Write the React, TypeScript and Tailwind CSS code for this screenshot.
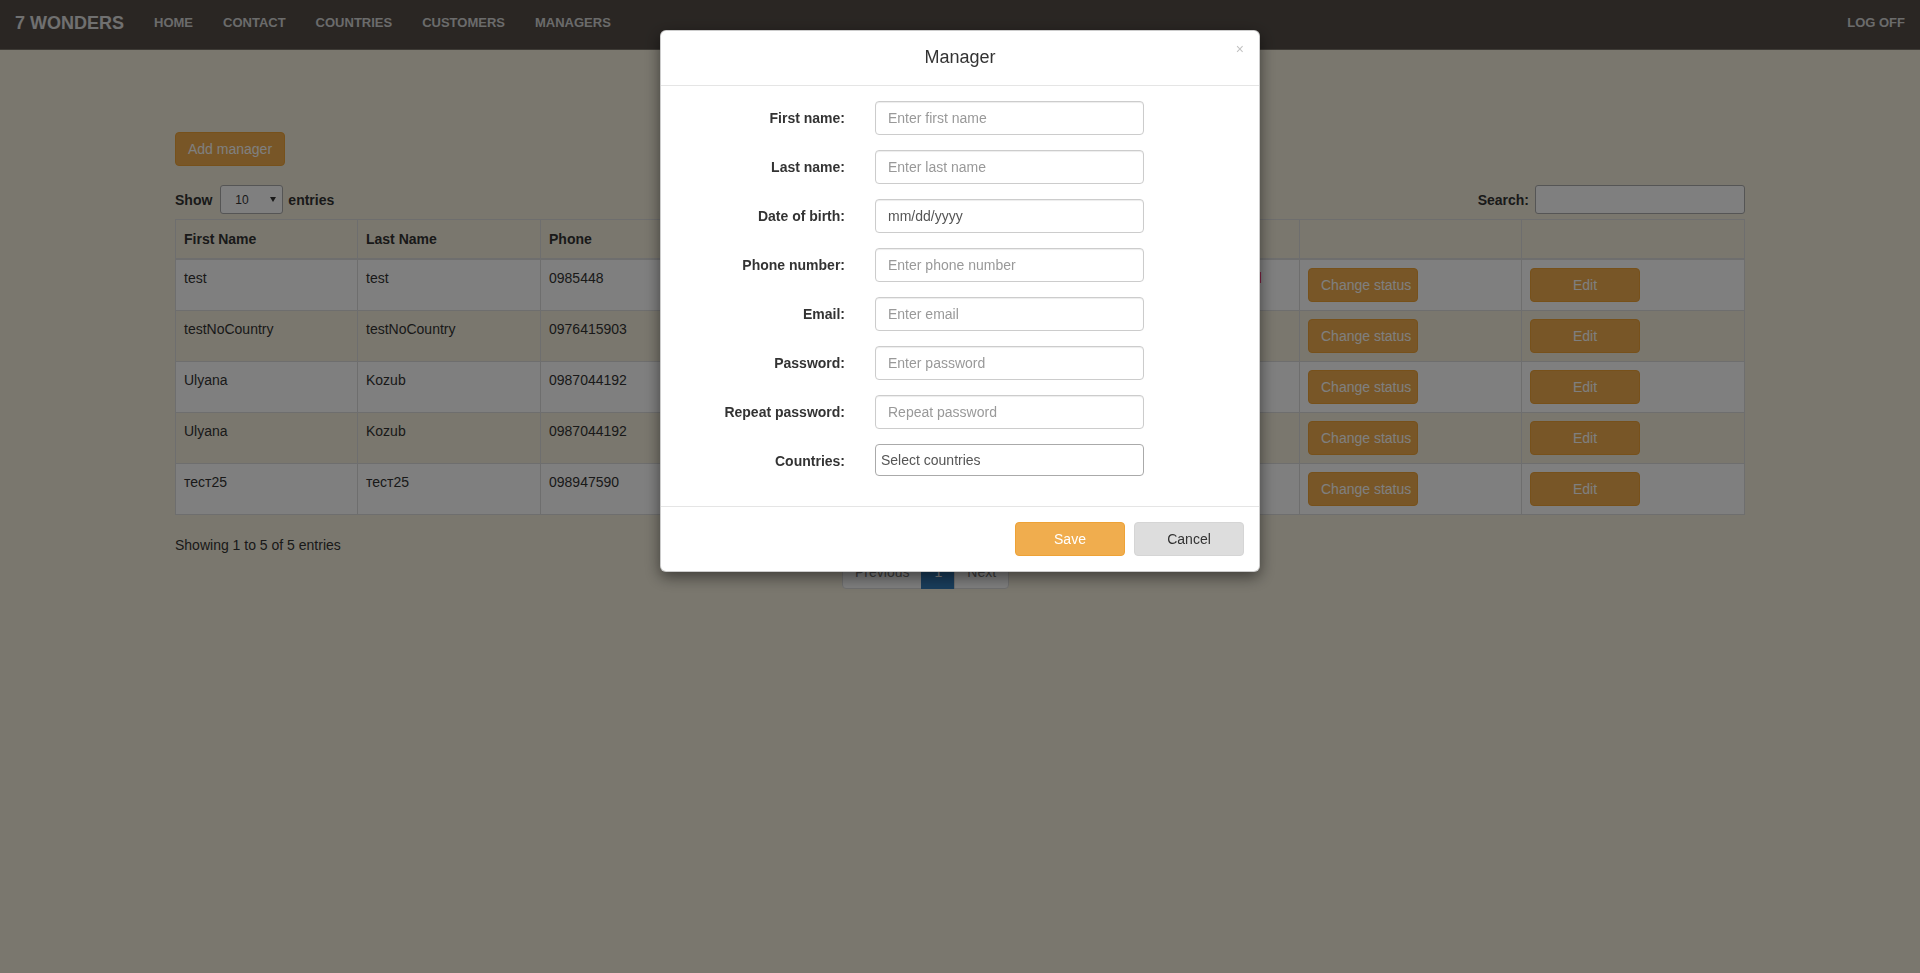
import { useState } from "react";

type Manager = {
  firstName: string;
  lastName: string;
  phone: string;
  email: string;
  birth: string;
  status: string;
};

const managers: Manager[] = [
  { firstName: "test", lastName: "test", phone: "0985448", email: "test@gmail.com", birth: "1995-03-12", status: "Blocked" },
  { firstName: "testNoCountry", lastName: "testNoCountry", phone: "0976415903", email: "nocountry@gmail.com", birth: "1993-07-21", status: "" },
  { firstName: "Ulyana", lastName: "Kozub", phone: "0987044192", email: "ulyana@gmail.com", birth: "1996-10-02", status: "" },
  { firstName: "Ulyana", lastName: "Kozub", phone: "0987044192", email: "ulyana.k@gmail.com", birth: "1996-10-02", status: "" },
  { firstName: "тест25", lastName: "тест25", phone: "098947590", email: "test25@gmail.com", birth: "1990-01-25", status: "" },
];

const navLinks = ["HOME", "CONTACT", "COUNTRIES", "CUSTOMERS", "MANAGERS"];

const fields = [
  { label: "First name:", placeholder: "Enter first name" },
  { label: "Last name:", placeholder: "Enter last name" },
  { label: "Date of birth:", value: "mm/dd/yyyy" },
  { label: "Phone number:", placeholder: "Enter phone number" },
  { label: "Email:", placeholder: "Enter email" },
  { label: "Password:", placeholder: "Enter password" },
  { label: "Repeat password:", placeholder: "Repeat password" },
];

function Navbar() {
  return (
    <nav className="h-[50px] bg-[#544d47] border-b border-[#7a746b] flex items-center justify-between px-[15px] pb-[4px]">
      <div className="flex items-center">
        <span className="text-[18px] font-bold text-[#e0e0e0] pr-[15px]">7 WONDERS</span>
        {navLinks.map((l) => (
          <a key={l} className="px-[15px] text-[13px] font-bold text-[#d6d6d6]">
            {l}
          </a>
        ))}
      </div>
      <a className="text-[13px] font-bold text-[#d6d6d6]">LOG OFF</a>
    </nav>
  );
}

function WarnButton({ children }: { children: string }) {
  return (
    <button className="w-[110px] h-[34px] rounded-[4px] bg-[#f0ad4e] border border-[#eea236] text-white text-[14px] px-[12px] whitespace-nowrap">
      {children}
    </button>
  );
}

function ManagersTable() {
  return (
    <table className="w-full table-fixed border-collapse border border-[#ddd] mt-[5px]">
      <colgroup>
        <col className="w-[182px]" />
        <col className="w-[183px]" />
        <col className="w-[182px]" />
        <col className="w-[240px]" />
        <col className="w-[241px]" />
        <col className="w-[96px]" />
        <col className="w-[222px]" />
        <col />
      </colgroup>
      <thead>
        <tr>
          {["First Name", "Last Name", "Phone", "Email", "Date of birth", "Status", "", ""].map((h, i) => (
            <th key={i} className="border border-[#ddd] border-b-2 p-[8px] text-left font-bold h-[39px]">
              {h}
            </th>
          ))}
        </tr>
      </thead>
      <tbody>
        {managers.map((m, i) => (
          <tr key={i} className={i % 2 === 0 ? "bg-white" : ""}>
            <td className="border border-[#ddd] p-[8px] align-top">{m.firstName}</td>
            <td className="border border-[#ddd] p-[8px] align-top">{m.lastName}</td>
            <td className="border border-[#ddd] p-[8px] align-top">{m.phone}</td>
            <td className="border border-[#ddd] p-[8px] align-top">{m.email}</td>
            <td className="border border-[#ddd] p-[8px] align-top">{m.birth}</td>
            <td className="border border-[#ddd] p-[8px] align-top text-[#ff2020]">{m.status}</td>
            <td className="border border-[#ddd] p-[8px] align-top">
              <WarnButton>Change status</WarnButton>
            </td>
            <td className="border border-[#ddd] p-[8px] align-top">
              <WarnButton>Edit</WarnButton>
            </td>
          </tr>
        ))}
      </tbody>
    </table>
  );
}

function ManagerModal() {
  const [values, setValues] = useState<Record<string, string>>({});
  return (
    <div className="fixed inset-0 bg-black/50 flex justify-center items-start pt-[30px]">
      <div className="relative w-[600px] bg-white rounded-[6px] border border-black/20 shadow-[0_5px_15px_rgba(0,0,0,0.5)]">
        {/* header */}
        <div className="border-b border-[#e5e5e5] px-[15px] pt-[14px] pb-[16px]">
          <h4 className="text-[18px] leading-[24px] text-center text-[#333]">Manager</h4>
        </div>
        <button className="absolute top-[11px] right-[15px] text-[14px] leading-none text-black/25">×</button>

        {/* body */}
        <div className="p-[15px]">
          {fields.map((f) => (
            <div key={f.label} className="flex mx-[-15px] mb-[15px]">
              <label className="w-[199px] px-[15px] pt-[7px] text-right font-bold text-[#333]">{f.label}</label>
              <div className="w-[299px] px-[15px]">
                <input
                  className="w-full h-[34px] border border-[#ccc] rounded-[4px] px-[12px] py-[6px] text-[14px] text-[#555] shadow-[inset_0_1px_1px_rgba(0,0,0,0.075)] placeholder:text-[#999] outline-none"
                  placeholder={f.placeholder}
                  value={f.value ?? values[f.label] ?? ""}
                  onChange={(e) => setValues({ ...values, [f.label]: e.target.value })}
                />
              </div>
            </div>
          ))}
          <div className="flex mx-[-15px] mb-[15px]">
            <label className="w-[199px] px-[15px] pt-[7px] text-right font-bold text-[#333]">Countries:</label>
            <div className="w-[299px] px-[15px]">
              <div className="h-[32px] border border-[#aaa] rounded-[4px] pl-[5px] flex items-center text-[14px] text-[#555]">
                Select countries
              </div>
            </div>
          </div>
        </div>

        {/* footer */}
        <div className="border-t border-[#e5e5e5] p-[15px] flex justify-end gap-[9px]">
          <button className="w-[110px] h-[34px] rounded-[4px] bg-[#f0ad4e] border border-[#eea236] text-white">Save</button>
          <button className="w-[110px] h-[34px] rounded-[4px] bg-[#dddddd] border border-[#d5d5d5] text-[#333]">Cancel</button>
        </div>
      </div>
    </div>
  );
}

export default function App() {
  return (
    <div className="min-h-screen bg-[#f5efdd] font-['Liberation_Sans',Arial,sans-serif] text-[14px] leading-[20px] text-[#333]">
      <Navbar />

      <div className="ml-[175px] w-[1570px] pt-[82px]">
        <WarnButton>Add manager</WarnButton>

        {/* datatable controls */}
        <div className="mt-[19px] h-[29px] flex items-center justify-between">
          <div className="flex items-center font-bold">
            <span>Show</span>
            <div className="ml-[8px] w-[63px] h-[29px] bg-white border border-[#aaa] rounded-[3px] flex items-center justify-between pl-[14px] pr-[6px] font-normal text-[12px]">
              <span>10</span>
              <svg width="6" height="5" viewBox="0 0 6 5">
                <path d="M0 0h6L3 5z" fill="#333" />
              </svg>
            </div>
            <span className="ml-[5px]">entries</span>
          </div>
          <div className="flex items-center font-bold">
            <span>Search:</span>
            <input className="ml-[6px] w-[210px] h-[29px] bg-white border border-[#aaa] rounded-[3px] outline-none" />
          </div>
        </div>

        <ManagersTable />

        <div className="mt-[20px]">Showing 1 to 5 of 5 entries</div>

        {/* pagination */}
        <div className="ml-[667px] flex">
          <a className="px-[12px] py-[6px] bg-white border border-[#ddd] rounded-l-[4px] text-[#777]">Previous</a>
          <a className="px-[12px] py-[6px] bg-[#337ab7] border border-[#337ab7] text-white -ml-px">1</a>
          <a className="px-[12px] py-[6px] bg-white border border-[#ddd] rounded-r-[4px] text-[#777] -ml-px">Next</a>
        </div>
      </div>

      <ManagerModal />
    </div>
  );
}
